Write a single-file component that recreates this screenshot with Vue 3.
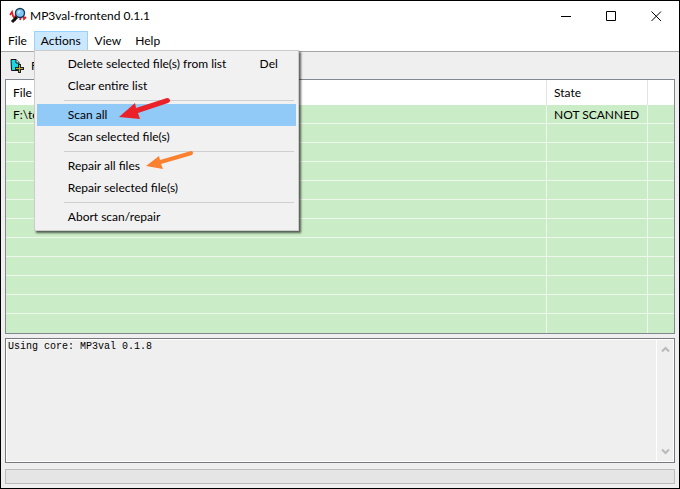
<template>
  <div class="window">
    <header class="title-bar">
      <svg class="app-icon" width="18" height="18" viewBox="0 0 18 18" aria-hidden="true">
        <path d="M1 8L3 5L4 9L6 12L7 6M11 13L12 10L14 7L15 12L17 10" fill="none" stroke="#df2026" stroke-width="1.800" />
        <path d="M8 10L3 15" stroke="#111" stroke-width="3" />
        <circle cx="11" cy="6" r="4.500" fill="#7fc6f6" stroke="#173a5c" stroke-width="1.400" />
        <path d="M9 6L11 4" stroke="#d9f1ff" stroke-width="1.500" />
      </svg>
      <h1 class="title">MP3val-frontend 0.1.1</h1>
      <div class="controls">
        <button type="button" aria-label="Minimize">
          <svg width="11" height="11" viewBox="0 0 11 11"><path d="M0 5.500H10" /></svg>
        </button>
        <button type="button" aria-label="Maximize">
          <svg width="11" height="11" viewBox="0 0 11 11"><path d="M.5.5H9.500V9.500H.5Z" /></svg>
        </button>
        <button type="button" aria-label="Close">
          <svg width="11" height="11" viewBox="0 0 11 11"><path d="M.5.5L10 10M10 .5L.5 10" /></svg>
        </button>
      </div>
    </header>

    <nav class="menu-bar">
      <div v-for="name in menus" :key="name" class="menu-slot">
        <button type="button" class="menu-name" :class="{ open: openMenu === name }" @click="toggle(name)">{{ name }}</button>
        <div v-if="name === 'Actions' && openMenu === name" class="dropdown">
          <template v-for="(group, g) in actions" :key="g">
            <hr v-if="g > 0">
            <button
              v-for="item in group"
              :key="item.label"
              type="button"
              class="menu-item"
              :class="{ active: item.label === current }"
              @mouseenter="current = item.label"
            >
              <span>{{ item.label }}</span>
              <span v-if="item.key" class="shortcut">{{ item.key }}</span>
            </button>
          </template>
          <svg class="arrows" width="90" height="80" viewBox="0 0 90 80" aria-hidden="true">
            <path d="M1 25L17 11L18 16L49 6Q52 6 52 9Q52 10 50 11L20 21L22 27Z" fill="#ea2128" />
            <path d="M28 74L41 64L42 68L73 59Q75 59 75 61Q75 62 74 63L43 72L45 77Z" fill="#f9812f" />
          </svg>
        </div>
      </div>
    </nav>

    <div class="toolbar">
      <button type="button" class="tool">
        <svg width="14" height="14" viewBox="0 0 14 14" aria-hidden="true">
          <path d="M1 .5H6L9 3.500V11.500H1.500Z" fill="#19d9e6" stroke="#111" />
          <path d="M6 .5V4H9" fill="#fff" stroke="#111" />
          <path d="M9.500 5V14M5 9.500H14" stroke="#222" stroke-width="3" />
          <path d="M9.500 6V13M6 9.500H13" stroke="#b5ac3c" />
        </svg>
        <span>Files</span>
      </button>
    </div>

    <main class="content">
      <table class="files">
        <thead>
          <tr><th>File</th><th class="state">State</th><th class="rest"></th></tr>
        </thead>
        <tbody>
          <tr v-for="(row, i) in rows" :key="i">
            <td>{{ row.file }}</td><td>{{ row.state }}</td><td></td>
          </tr>
        </tbody>
      </table>

      <div class="log">
        <textarea v-model="log" aria-label="Log" readonly></textarea>
        <div class="scroll">
          <button type="button" aria-label="Scroll up">
            <svg width="9" height="7" viewBox="0 0 9 7"><path d="M1 5.500L4.500 2L8 5.500" /></svg>
          </button>
          <button type="button" aria-label="Scroll down">
            <svg width="9" height="7" viewBox="0 0 9 7"><path d="M1 1.500L4.500 5L8 1.500" /></svg>
          </button>
        </div>
      </div>

      <div class="progress" role="progressbar" aria-label="Progress" aria-valuenow="0"></div>
    </main>
  </div>
</template>

<script setup>
import { ref } from 'vue';

const menus = ['File', 'Actions', 'View', 'Help'];
const openMenu = ref('Actions');
const current = ref('Scan all');
const log = ref('Using core: MP3val 0.1.8');

const actions = [
  [{ label: 'Delete selected file(s) from list', key: 'Del' }, { label: 'Clear entire list' }],
  [{ label: 'Scan all' }, { label: 'Scan selected file(s)' }],
  [{ label: 'Repair all files' }, { label: 'Repair selected file(s)' }],
  [{ label: 'Abort scan/repair' }]
];

// the list keeps its grid lines below the last file
const rows = Array.from({ length: 12 }, () => ({ file: '', state: '' }));
rows[0] = { file: 'F:\\test', state: 'NOT SCANNED' };

const toggle = (name) => {
  openMenu.value = openMenu.value === name ? '' : name;
};
</script>

<style>
body { margin: 0; }
</style>

<style scoped>
* { box-sizing: border-box; }
.window { display: flex; flex-direction: column; min-height: 100vh; border: 1px solid #000; background: #f0eff0; color: #000; font: 12px/16px Lato, "Open Sans", sans-serif; }
button { border: 0; padding: 0; background: none; color: inherit; font: inherit; }

.title-bar { display: flex; align-items: center; height: 30px; padding-left: 8px; background: #fff; }
.title { margin: 0 0 0 3px; font-size: 12px; font-weight: 400; }
.controls { display: flex; margin-left: auto; }
.controls button { display: flex; align-items: center; justify-content: center; width: 45px; height: 30px; }
.controls svg { fill: none; stroke: #000; }

.menu-bar { display: flex; height: 21px; background: #fff; border-bottom: 1px solid #a5a5a5; }
.menu-slot { position: relative; }
.menu-name { height: 20px; padding: 0 6px; border: 1px solid transparent; }
.menu-name.open { border-color: #99d1ff; background: #cce8ff; }
.dropdown { position: absolute; top: 19px; left: 0; z-index: 1; width: 265px; padding: 2px; border: 1px solid #ccc; background: #f2f1f2; box-shadow: 2px 2px 2px rgba(0, 0, 0, 0.6); }
.menu-item { display: flex; justify-content: space-between; align-items: center; width: 100%; height: 22px; padding: 0 18px 0 31px; white-space: nowrap; }
.menu-item.active { background: #91c9f7; }
.dropdown hr { height: 1px; margin: 3px 2px 3px 27px; border: 0; background: #d0cfd0; }
.arrows { position: absolute; top: 41px; left: 83px; pointer-events: none; }

.toolbar { display: flex; align-items: center; height: 27px; padding-left: 9px; }
.tool { display: flex; align-items: center; gap: 7px; }

.content { display: flex; flex: 1; flex-direction: column; padding: 0 4px 4px; }
.files { width: 100%; border: 1px solid #828790; border-collapse: separate; border-spacing: 0; table-layout: fixed; background: #caecc6; }
.files th, .files td { padding: 0 0 0 7px; border-right: 1px solid #edf7eb; text-align: left; font-weight: 400; white-space: nowrap; overflow: hidden; }
.files th { height: 25px; background: #fff; border-color: #e3e3e3; }
.files td { height: 19px; padding-top: 1px; border-bottom: 1px solid #edf7eb; }
.files th:last-child, .files td:last-child { border-right: 0; }
.files tr:last-child td { border-bottom: 0; }
.files .state { width: 101px; }
.files .rest { width: 26px; }

.log { display: flex; flex: 1; min-height: 125px; margin-top: 4px; border: 1px solid #77777c; outline: 1px solid #fff; outline-offset: -2px; }
.log textarea { flex: 1; padding: 2px; border: 0; outline: 0; resize: none; background: none; color: #000; font: 10px/12px "Liberation Mono", monospace; overflow: hidden; }
.scroll { display: flex; flex-direction: column; justify-content: space-between; width: 18px; padding: 2px 0; border-left: 1px solid #fff; }
.scroll button { display: flex; align-items: center; justify-content: center; height: 17px; }
.scroll svg { fill: none; stroke: #b9b8ba; stroke-width: 2; }

.progress { height: 15px; margin-top: 6px; border: 1px solid #bcbcbc; background: #e6e5e6; }
</style>
